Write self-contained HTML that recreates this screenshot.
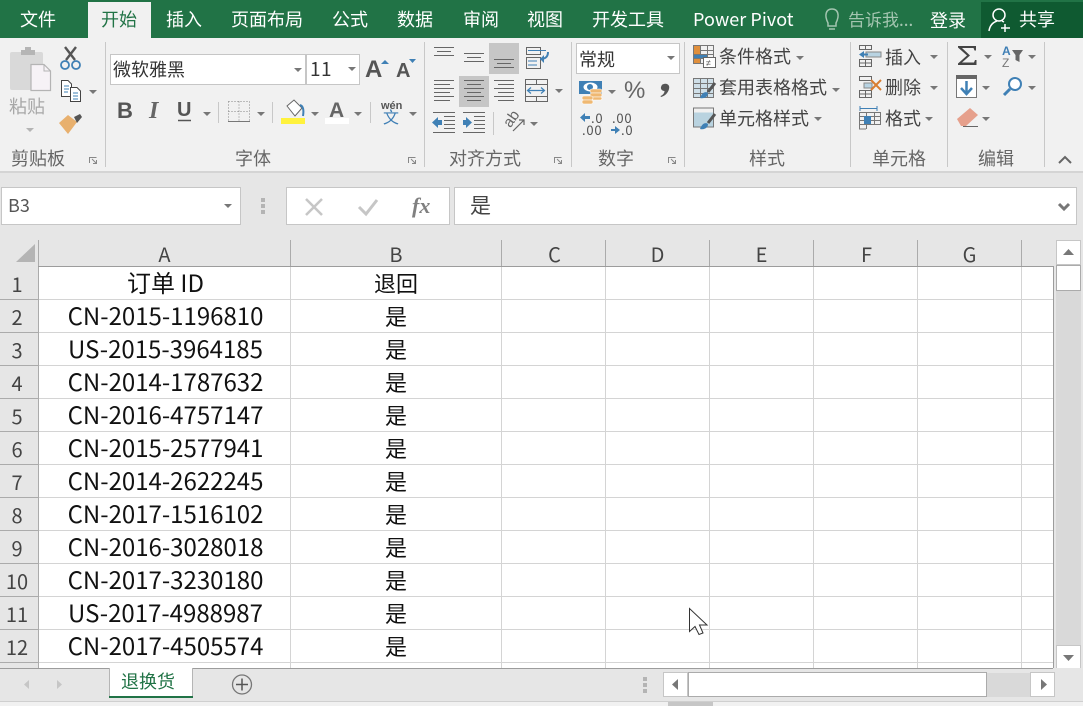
<!DOCTYPE html>
<html lang="zh"><head><meta charset="utf-8"><title>Excel</title>
<style>
html,body{margin:0;padding:0}
body{width:1083px;height:706px;overflow:hidden;position:relative;background:#e6e6e6;font-family:"Liberation Sans","Noto Sans CJK SC",sans-serif}
div,span{position:absolute;white-space:nowrap;box-sizing:border-box}
.y{font-family:"Noto Sans CJK SC","Liberation Sans",sans-serif}
.tab{top:4px;height:32px;line-height:30px;font-size:18px;color:#fff;font-family:"Noto Sans CJK SC",sans-serif}
.rb{font-size:18px;line-height:24px;height:24px;color:#444;font-family:"Noto Sans CJK SC",sans-serif}
.lb{font-size:18px;line-height:24px;height:24px;top:146px;color:#666;font-family:"Noto Sans CJK SC",sans-serif}
.sep{width:1px;background:#c8c8c8;top:42px;height:125px}
.ch{top:240px;height:26px;line-height:27px;text-align:center;font-size:20px;color:#444;font-family:"Noto Sans CJK SC",sans-serif}
.n{left:0;width:34px;text-align:center;font-size:20px;color:#444;height:33px;line-height:33px;font-family:"Noto Sans CJK SC",sans-serif}
.a{left:40px;width:251px;text-align:center;font-size:24px;color:#111;height:33px;line-height:29px;font-family:"Noto Sans CJK SC",sans-serif}
.b{left:291px;width:210px;text-align:center;font-size:22px;color:#111;height:33px;line-height:33px;font-family:"Noto Sans CJK SC",sans-serif}
.d{font-size:13px;color:#555;line-height:13px;letter-spacing:.8px;font-family:"Noto Sans CJK SC",sans-serif}
</style></head><body>
<div style="left:0;top:0;width:1083px;height:38px;background:#217346"></div>
<div style="left:88px;top:2px;width:63px;height:36px;background:#f1f1f1"></div>
<div style="left:981px;top:2px;width:102px;height:36px;background:#0f5a31"></div>
<div style="left:0;top:38px;width:1083px;height:133px;background:#f1f1f1"></div>
<div style="left:0;top:171px;width:1083px;height:2px;background:#d4d4d4"></div>

<div class="tab" style="left:20px">文件</div>
<div class="tab" style="left:101px;color:#217346">开始</div>
<div class="tab" style="left:166px">插入</div>
<div class="tab" style="left:231px">页面布局</div>
<div class="tab" style="left:332px">公式</div>
<div class="tab" style="left:397px">数据</div>
<div class="tab" style="left:463px">审阅</div>
<div class="tab" style="left:527px">视图</div>
<div class="tab" style="left:592px">开发工具</div>
<div class="tab" style="left:693px;letter-spacing:.05px">Power Pivot</div>
<div class="tab" style="left:848px;font-size:17px;color:#a3c5b0">告诉我...</div>
<div class="tab" style="left:930px;top:5px">登录</div>
<div class="tab" style="left:1019px">共享</div>

<div class="sep" style="left:105px"></div><div class="sep" style="left:424px"></div><div class="sep" style="left:571px"></div><div class="sep" style="left:684px"></div><div class="sep" style="left:850px"></div><div class="sep" style="left:947px"></div><div class="sep" style="left:1044px"></div>

<!-- highlighted alignment buttons -->
<div style="left:489px;top:43px;width:30px;height:31px;background:#c6c6c6"></div>
<div style="left:459px;top:76px;width:30px;height:31px;background:#c6c6c6"></div>

<div class="y" style="left:9px;top:94px;font-size:18px;line-height:24px;color:#a8a8a8">粘贴</div>
<div class="lb" style="left:11px">剪贴板</div>
<div class="lb" style="left:235px">字体</div>
<div class="lb" style="left:449px">对齐方式</div>
<div class="lb" style="left:598px">数字</div>
<div class="lb" style="left:749px">样式</div>
<div class="lb" style="left:872px">单元格</div>
<div class="lb" style="left:978px">编辑</div>

<!-- font boxes -->
<div style="left:110px;top:54px;width:196px;height:31px;background:#fff;border:1px solid #c6c6c6"></div>
<div style="left:306px;top:54px;width:54px;height:31px;background:#fff;border:1px solid #c6c6c6"></div>
<div class="rb" style="left:113px;top:57px;color:#333">微软雅黑</div>
<div class="rb" style="left:310px;top:57px;font-size:19px;color:#333;letter-spacing:.5px">11</div>
<div style="left:576px;top:43px;width:104px;height:31px;background:#fff;border:1px solid #c6c6c6"></div>
<div class="rb" style="left:579px;top:47px;color:#333">常规</div>

<div style="left:117px;top:98px;font-size:22px;line-height:26px;font-weight:700;color:#555;font-family:'Liberation Sans',sans-serif">B</div>
<div style="left:149px;top:98px;font-size:24px;line-height:26px;font-style:italic;font-weight:700;color:#666;font-family:'Liberation Serif',serif">I</div>
<div style="left:177px;top:97px;font-size:20px;line-height:26px;color:#555;font-weight:700;font-family:'Liberation Sans',sans-serif">U</div>
<div style="left:365px;top:55px;font-size:24px;line-height:30px;color:#555;font-family:'Liberation Sans',sans-serif;font-weight:700">A</div>
<div style="left:396px;top:58px;font-size:20px;line-height:27px;color:#555;font-family:'Liberation Sans',sans-serif;font-weight:700">A</div>
<div style="left:329px;top:97px;font-size:21px;line-height:28px;color:#666;font-family:'Liberation Sans',sans-serif;font-weight:700">A</div>
<div style="left:381px;top:100px;font-size:11px;line-height:12px;color:#555;font-weight:700">wén</div>
<div class="y" style="left:383px;top:106px;font-size:16px;line-height:20px;color:#3f7fb5">文</div>
<div style="left:624px;top:74px;font-size:24px;line-height:34px;color:#666">%</div>
<div class="d" style="left:591px;top:111px">.0</div>
<div class="d" style="left:582px;top:123px">.00</div>
<div class="d" style="left:612px;top:111px">.00</div>
<div class="d" style="left:621px;top:123px">.0</div>

<div class="rb" style="left:719px;top:44px">条件格式</div>
<div class="rb" style="left:719px;top:75px">套用表格格式</div>
<div class="rb" style="left:719px;top:106px">单元格样式</div>
<div class="rb" style="left:885px;top:45px">插入</div>
<div class="rb" style="left:885px;top:75px">删除</div>
<div class="rb" style="left:885px;top:106px">格式</div>
<div style="left:1002px;top:45px;font-size:12px;line-height:12px;font-weight:700;color:#3f7fb5">A</div>
<div style="left:1002px;top:57px;font-size:12px;line-height:12px;color:#777">Z</div>

<!-- formula bar -->
<div style="left:1px;top:187px;width:240px;height:38px;background:#fff;border:1px solid #c6c6c6"></div>
<div class="y" style="left:8px;top:192px;font-size:18px;line-height:26px;color:#555">B3</div>
<div style="left:286px;top:187px;width:164px;height:38px;background:#fff;border:1px solid #c6c6c6"></div>
<div style="left:454px;top:187px;width:623px;height:38px;background:#fff;border:1px solid #c6c6c6"></div>
<div style="left:412px;top:191px;font-size:22px;line-height:30px;font-style:italic;font-weight:700;color:#808080;font-family:'Liberation Serif',serif">fx</div>
<div class="y" style="left:470px;top:191px;font-size:21px;line-height:28px;color:#444">是</div>

<!-- sheet -->
<div style="left:39px;top:267px;width:1015px;height:401px;background:#fff"></div>
<svg style="position:absolute;left:0;top:0" width="1083" height="706" viewBox="0 0 1083 706">
<g fill="none" stroke="#d4d4d4" shape-rendering="crispEdges">
<path d="M290.500 267V668M501.500 267V668M605.500 267V668M709.500 267V668M813.500 267V668M917.500 267V668M1021.500 267V668"/>
<path d="M39 299.500H1053M39 332.500H1053M39 365.500H1053M39 398.500H1053M39 431.500H1053M39 464.500H1053M39 497.500H1053M39 530.500H1053M39 563.500H1053M39 596.500H1053M39 629.500H1053M39 662.500H1053"/>
</g>
<g fill="none" stroke="#ababab" shape-rendering="crispEdges">
<path d="M290.500 240V266M501.500 240V266M605.500 240V266M709.500 240V266M813.500 240V266M917.500 240V266M1021.500 240V266M38.500 240V668"/>
<path d="M0 299.500H38M0 332.500H38M0 365.500H38M0 398.500H38M0 431.500H38M0 464.500H38M0 497.500H38M0 530.500H38M0 563.500H38M0 596.500H38M0 629.500H38M0 662.500H38"/>
<path d="M38 266.500H1053.500V668.500H0" stroke="#9c9c9c"/>
</g>
<path d="M16 262L35 244V262Z" fill="#b4b4b4"/>

<!-- paste -->
<rect x="10" y="52" width="33" height="38" rx="2" fill="#d9d9d9"/>
<path d="M21 55V50H25V47H31V50H35V55Z" fill="#b5b5b5"/>
<path d="M31 64.500H44L50.500 71V90.500H31Z" fill="#f6f2f6" stroke="#b4b4b4" stroke-width="1.200"/>
<path d="M44 65V71H50" fill="none" stroke="#b4b4b4"/>
<path d="M26 128H34L30 132Z" fill="#b4b4b4"/>
<!-- scissors -->
<path d="M65 47L75 60M76 47L66 60" stroke="#555" stroke-width="2.400" fill="none"/>
<circle cx="65" cy="65" r="4" fill="none" stroke="#3f80b5" stroke-width="1.800"/><circle cx="76" cy="65" r="4" fill="none" stroke="#3f80b5" stroke-width="1.800"/>
<!-- copy -->
<path d="M61.500 80.500H68L71.500 84V96.500H61.500Z" fill="#fff" stroke="#444"/>
<path d="M70.500 87.500H77L80.500 91V101.500H70.500Z" fill="#fff" stroke="#444"/>
<path d="M64 86H69M64 89H69M64 92H68M73 93H78M73 96H78M73 99H78" stroke="#3f80b5"/>
<path d="M89 90H97L93 94Z" fill="#777"/>
<!-- painter -->
<path d="M59 123L68 115L77 122L68 134Z" fill="#e8b06e"/>
<path d="M74 117L80 114L82 117L77 123Z" fill="#555"/>
<!-- dialog launchers -->
<g fill="none" stroke="#888"><path d="M97.500 157.500H90.500V163M93 159L97 163M94 163.500H97.500V160" transform="translate(-1,0)"/><path d="M415.500 157.500H408.500V163M411 159L415 163M412 163.500H415.500V160"/><path d="M561.500 157.500H554.500V163M557 159L561 163M558 163.500H561.500V160"/><path d="M675.500 157.500H668.500V163M671 159L675 163M672 163.500H675.500V160"/></g>
<!-- font arrows -->
<g fill="#777"><path d="M294 68H302L298 72Z"/><path d="M348 67H356L352 71Z"/><path d="M203 112H211L207 116Z"/><path d="M257 112H265L261 116Z"/><path d="M311 112H319L315 116Z"/><path d="M354 112H362L358 116Z"/><path d="M409 112H417L413 116Z"/></g>
<path d="M381 64L385 60L389 64Z" fill="#3f80b5"/><path d="M409 59H416L412.500 63Z" fill="#3f80b5"/>
<path d="M178 120.500H191" stroke="#555" stroke-width="1.500"/>
<!-- separators small -->
<path d="M218.500 102V123M272.500 102V123M370.500 102V123M493.500 112V135" stroke="#c8c8c8"/>
<!-- borders -->
<g fill="none" stroke="#888" stroke-dasharray="1 2" shape-rendering="crispEdges"><path d="M228.500 101.500H249.500V121M228.500 101.500V121M239 101.500V121M228.500 111.500H249.500"/></g><path d="M228 121.500H250" stroke="#777" shape-rendering="crispEdges"/>
<!-- fill color -->
<path d="M287 106L294 100L302 108L295 116Z" fill="#fff" stroke="#666"/>
<path d="M300 105C303 106 304 110 303 116" fill="none" stroke="#3f80b5" stroke-width="2"/>
<rect x="281" y="118" width="24" height="6" fill="#fff23d"/>
<rect x="325" y="118" width="24" height="6" fill="#fff"/>
<!-- align -->
<g stroke="#666" stroke-width="1.100" fill="none" shape-rendering="crispEdges">
<path d="M434 47.500H454M437 51.500H451M434 55.500H454"/>
<path d="M464 53.500H484M467 57.500H481M464 61.500H484"/>
<path d="M494 59.500H514M497 63.500H511M494 67.500H514"/>
<path d="M434 80.500H454M434 84.500H450M434 88.500H454M434 92.500H450M434 96.500H454M434 100.500H450"/>
<path d="M464 80.500H484M467 84.500H481M464 88.500H484M467 92.500H481M464 96.500H484M467 100.500H481"/>
<path d="M494 80.500H514M498 84.500H514M494 88.500H514M498 92.500H514M494 96.500H514M498 100.500H514"/>
<path d="M433 112.500H455M444 116.500H455M444 120.500H455M444 124.500H455M444 128.500H455M433 132.500H455"/>
<path d="M463 112.500H485M474 116.500H485M474 120.500H485M474 124.500H485M474 128.500H485M463 132.500H485"/>
</g>
<path d="M432 122.500L438 117V120H442V125H438V128Z" fill="#3f80b5"/>
<path d="M472 122.500L466 117V120H463V125H466V128Z" fill="#3f80b5"/>
<!-- wrap -->
<g fill="none"><rect x="526.500" y="47.500" width="14" height="7" stroke="#666"/><rect x="526.500" y="57.500" width="14" height="11" stroke="#666"/><path d="M528 50.500H546M528 61H537M528 65H537" stroke="#3f80b5"/><path d="M548 52C548 58 544 59 540 59" stroke="#3f80b5" stroke-width="2"/><path d="M540 59L544 55V63Z" fill="#3f80b5"/></g>
<!-- merge -->
<g fill="none" stroke="#666" shape-rendering="crispEdges"><rect x="525.500" y="79.500" width="22" height="22"/><path d="M525 84.500H547M525 96.500H547M536.500 80V84M536.500 97V101"/></g>
<path d="M528 90.500H544M531 87.500L527.500 90.500L531 93.500M541 87.500L544.500 90.500L541 93.500" fill="none" stroke="#3f80b5" stroke-width="1.200"/>
<path d="M555 89H563L559 93Z" fill="#777"/>
<!-- orientation -->
<path d="M513 131L524 120M519 120H524V125" fill="none" stroke="#666" stroke-width="1.200"/>
<text x="505" y="126" font-size="15" font-family="Liberation Sans" fill="#666" transform="rotate(-55 510 122)">ab</text>
<path d="M530 122H538L534 126Z" fill="#777"/>
<path d="M667 56H675L671 60Z" fill="#777"/>
<!-- money -->
<rect x="579" y="81" width="23" height="13" fill="#3f80b5"/><ellipse cx="590.500" cy="87" rx="7" ry="4.500" fill="#fff"/><circle cx="590" cy="87" r="3" fill="#3f80b5"/>
<g fill="#efb872" stroke="#fff" stroke-width=".6"><rect x="590" y="89" width="12" height="4" rx="2"/><rect x="590" y="93" width="12" height="4" rx="2"/><rect x="592" y="97" width="10" height="3" rx="1.500"/><rect x="582" y="96" width="11" height="4" rx="2"/><rect x="582" y="100" width="11" height="4" rx="2"/></g>
<path d="M608 90H616L612 94Z" fill="#777"/>
<!-- comma -->
<path d="M664 84C668 83 670 86 669 89C668 93 665 96 661 97L660.500 96C663 95 664.500 93 664.500 91C662 91 660.500 89 661 87C661.500 85 662.500 84 664 84Z" fill="#555"/>
<!-- decimals -->
<path d="M580 117.500L585 113V116H590V119H585V122Z" fill="#3f80b5"/>
<path d="M611 129H615V126L620 130L615 134V131H611Z" fill="#3f80b5"/>
<!-- styles icons -->
<g fill="none" stroke="#777" shape-rendering="crispEdges"><rect x="693.500" y="45.500" width="20" height="18"/><path d="M693 50.500H714M693 54.500H714M693 58.500H714M700.500 46V64M707.500 46V64"/></g>
<rect x="694" y="46" width="6" height="5" fill="#e08f3c"/><rect x="694" y="51" width="6" height="3" fill="#e08f3c"/><rect x="694" y="55" width="13" height="3" fill="#3f80b5"/><rect x="694" y="59" width="6" height="4" fill="#e08f3c"/>
<rect x="703.500" y="57.500" width="12" height="10" fill="#fff" stroke="#666"/><text x="706" y="66" font-size="9" fill="#555" font-family="Liberation Sans">≠</text>
<g fill="none" stroke="#777"><rect x="693.500" y="78.500" width="20" height="19" fill="#cfdfe8"/><path d="M693 83.500H714M693 88.500H714M693 93.500H714M700.500 79V97M707.500 79V97"/></g>
<path d="M708 92L715 83" stroke="#555" stroke-width="3"/><path d="M700 98C702 92 706 91 708 93C708 97 704 99 700 98Z" fill="#3f80b5"/>
<rect x="693.500" y="108" width="20" height="19" fill="#b9d3e0" stroke="#777"/><rect x="694" y="108.500" width="19" height="4" fill="#f1f1f1"/>
<path d="M708 123L715 114" stroke="#555" stroke-width="3"/><path d="M700 129C702 123 706 122 708 124C708 128 704 130 700 129Z" fill="#3f80b5"/>
<g fill="#777"><path d="M796 56H804L800 60Z"/><path d="M832 88H840L836 92Z"/><path d="M814 117H822L818 121Z"/><path d="M930 55H938L934 59Z"/><path d="M930 86H938L934 90Z"/><path d="M925 117H933L929 121Z"/><path d="M984 55H992L988 59Z"/><path d="M1028 55H1036L1032 59Z"/><path d="M982 86H990L986 90Z"/><path d="M1028 86H1036L1032 90Z"/><path d="M982 117H990L986 121Z"/></g>
<!-- cell icons -->
<g fill="none" stroke="#666" shape-rendering="crispEdges"><path d="M859.500 45.500H871.500V49.500H859.500ZM859.500 59.500H871.500V66.500H859.500ZM859.500 63H871.500M865.500 59.500V66.500M865.500 45.500V49.500"/>
<path d="M859.500 76.500H871.500V80.500H859.500ZM859.500 90.500H871.500V97.500H859.500ZM859.500 94H871.500M865.500 90.500V97.500"/></g>
<rect x="866" y="52" width="15" height="5" fill="#b8d3e2" stroke="#888"/>
<path d="M859 54.500L864 51V53.500H868V55.500H864V58Z" fill="#3f80b5"/>
<rect x="864" y="83" width="8" height="5" fill="#b8d3e2" stroke="#888"/>
<path d="M871 80L881 90M881 80L871 90" stroke="#d97d30" stroke-width="2"/>
<path d="M860 108.500H877M860 106V111M877 106V111" stroke="#3f80b5"/>
<g fill="none" stroke="#777" shape-rendering="crispEdges"><rect x="859.500" y="112.500" width="21" height="12"/><path d="M866.500 112V129M874.500 112V125M859 116.500H881M859 120.500H881M859.500 125V129H866"/></g>
<rect x="864" y="116" width="7" height="8" fill="#3f80b5"/>
<!-- edit icons -->
<path d="M958 46H976V50.500H974.500L973.500 48H962L970 55.500L962 62.500H974L975 60H976.500V65H958V63.500L967 55.500L958 47.500Z" fill="#444"/>
<path d="M1012 50H1023L1019.500 55V62L1015.500 60V55Z" fill="#666"/>
<rect x="956.500" y="75.500" width="20" height="22" fill="#fff" stroke="#777"/><rect x="956" y="75" width="21" height="4" fill="#666"/>
<path d="M966.500 81V93M961 88L966.500 94L972 88" fill="none" stroke="#3f80b5" stroke-width="2.500"/>
<circle cx="1015" cy="84" r="6" fill="#fff" stroke="#3f80b5" stroke-width="2"/><path d="M1010 89L1004 95" stroke="#3f80b5" stroke-width="3"/>
<path d="M957 119L970 108L978 115L966 126H961Z" fill="#e6a08c"/><path d="M963 126.500H978" stroke="#666"/>
<path d="M1059 163L1065 157L1071 163" fill="none" stroke="#666" stroke-width="2"/>
<!-- top icons -->
<path d="M828 23C824 15 826 9 832 9C838 9 840 15 836 23V26H828ZM829 29H835" fill="none" stroke="#a3c5b0" stroke-width="1.500"/>
<circle cx="999" cy="15" r="6" fill="none" stroke="#fff" stroke-width="1.500"/><path d="M989 31C990 24 994 22 997 21M1002 21L1004 22M1005 24V32M1001 28H1010" fill="none" stroke="#fff" stroke-width="1.500"/>
<!-- namebox icons -->
<path d="M224 204H232L228 208Z" fill="#777"/>
<path d="M261 198h4v4h-4zM261 204h4v4h-4zM261 210h4v4h-4z" fill="#b4b4b4"/>
<path d="M306 199L322 215M322 199L306 215" stroke="#c6c6c6" stroke-width="2.500"/>
<path d="M359 207L366 214L377 200" fill="none" stroke="#c6c6c6" stroke-width="3"/>
<path d="M1059 204L1064 209L1069 204" fill="none" stroke="#777" stroke-width="3"/>
<!-- v scrollbar -->
<rect x="1056" y="240" width="25" height="430" fill="#d9d9d9"/>
<rect x="1056.500" y="240.500" width="24" height="24" fill="#fff" stroke="#c6c6c6"/>
<rect x="1056.500" y="265.500" width="24" height="25" fill="#fff" stroke="#ababab"/>
<rect x="1056.500" y="645.500" width="24" height="24" fill="#fff" stroke="#c6c6c6"/>
<path d="M1063 255L1068.500 249L1074 255Z" fill="#777"/><path d="M1063 655L1068.500 661L1074 655Z" fill="#777"/>
<!-- bottom -->
<rect x="0" y="668" width="1083" height="34" fill="#e6e6e6"/>
<path d="M0 668.500H109M193 668.500H1053" stroke="#9c9c9c" shape-rendering="crispEdges"/>
<rect x="0" y="702" width="1083" height="4" fill="#f1f1f1"/><path d="M0 701.500H1083" stroke="#cfcfcf" shape-rendering="crispEdges"/>
<rect x="668" y="702" width="45" height="4" fill="#c6c6c6"/>
<path d="M109.500 668V697H192.500V668" fill="#fff" stroke="#b5b5b5" shape-rendering="crispEdges"/>
<rect x="109" y="696" width="84" height="2" fill="#217346"/>
<path d="M29 680V689L24 684.500Z" fill="#c6c6c6"/>
<path d="M57 680V689L62 684.500Z" fill="#c6c6c6"/>
<circle cx="242" cy="684.500" r="9.500" fill="none" stroke="#777" stroke-width="1.300"/><path d="M236 684.500H248M242 678.500V690.500" stroke="#555" stroke-width="1.500"/>
<path d="M643 677h4v4h-4zM643 683h4v4h-4zM643 689h4v4h-4z" fill="#b4b4b4"/>
<rect x="663.500" y="672.500" width="24" height="24" fill="#fff" stroke="#c6c6c6"/>
<rect x="688.500" y="672.500" width="298" height="24" fill="#fff" stroke="#ababab"/>
<rect x="987" y="673" width="43" height="24" fill="#d9d9d9"/>
<rect x="1030.500" y="672.500" width="24" height="24" fill="#fff" stroke="#c6c6c6"/>
<path d="M678 679V690L672 684.500Z" fill="#777"/><path d="M1041 679V690L1047 684.500Z" fill="#777"/>
<!-- cursor -->
<path d="M689.500 608.500V631.500L695 626.500L699 634.500L703 633L699.500 625H707Z" fill="#fff" stroke="#333" stroke-width="1"/>
</svg>

<div class="ch" style="left:39px;width:251px">A</div><div class="ch" style="left:291px;width:210px">B</div><div class="ch" style="left:503px;width:103px">C</div><div class="ch" style="left:606px;width:103px">D</div><div class="ch" style="left:710px;width:103px">E</div><div class="ch" style="left:815px;width:103px">F</div><div class="ch" style="left:918px;width:103px">G</div>

<div class="n" style="top:267px">1</div><div class="a" style="top:267px">订单 ID</div><div class="b" style="top:266px;line-height:35px">退回</div>
<div class="n" style="top:300px">2</div><div class="a" style="top:300px">CN-2015-1196810</div><div class="b" style="top:300px">是</div>
<div class="n" style="top:333px">3</div><div class="a" style="top:333px">US-2015-3964185</div><div class="b" style="top:333px">是</div>
<div class="n" style="top:366px">4</div><div class="a" style="top:366px">CN-2014-1787632</div><div class="b" style="top:366px">是</div>
<div class="n" style="top:399px">5</div><div class="a" style="top:399px">CN-2016-4757147</div><div class="b" style="top:399px">是</div>
<div class="n" style="top:432px">6</div><div class="a" style="top:432px">CN-2015-2577941</div><div class="b" style="top:432px">是</div>
<div class="n" style="top:465px">7</div><div class="a" style="top:465px">CN-2014-2622245</div><div class="b" style="top:465px">是</div>
<div class="n" style="top:498px">8</div><div class="a" style="top:498px">CN-2017-1516102</div><div class="b" style="top:498px">是</div>
<div class="n" style="top:531px">9</div><div class="a" style="top:531px">CN-2016-3028018</div><div class="b" style="top:531px">是</div>
<div class="n" style="top:564px">10</div><div class="a" style="top:564px">CN-2017-3230180</div><div class="b" style="top:564px">是</div>
<div class="n" style="top:597px">11</div><div class="a" style="top:597px">US-2017-4988987</div><div class="b" style="top:597px">是</div>
<div class="n" style="top:630px">12</div><div class="a" style="top:630px">CN-2017-4505574</div><div class="b" style="top:630px">是</div>

<div class="y" style="left:121px;top:668px;font-size:18px;line-height:26px;color:#217346">退换货</div>
</body></html>
